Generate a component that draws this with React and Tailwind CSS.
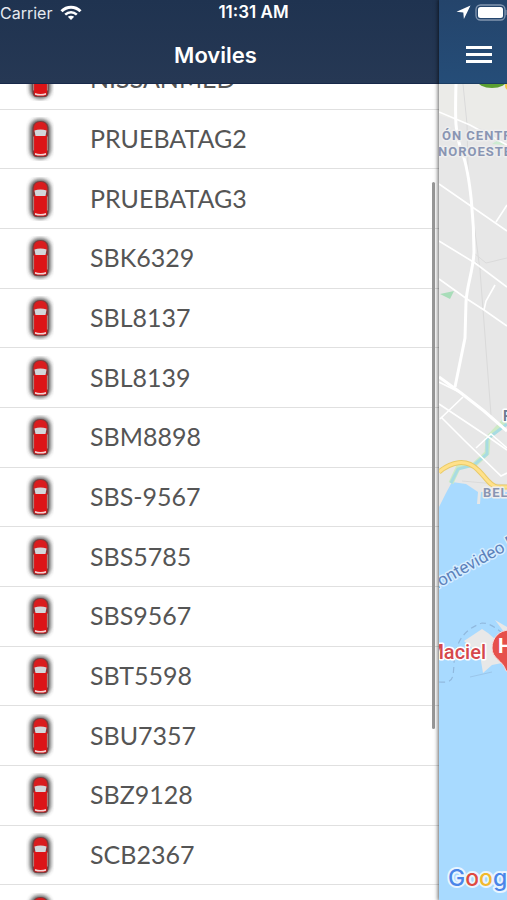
const VEHICLES = [
  'NISSANMED',
  'PRUEBATAG2',
  'PRUEBATAG3',
  'SBK6329',
  'SBL8137',
  'SBL8139',
  'SBM8898',
  'SBS-9567',
  'SBS5785',
  'SBS9567',
  'SBT5598',
  'SBU7357',
  'SBZ9128',
  'SCB2367',
  'SCB2368',
];

/**
 * Drawer with the list of tracked vehicles, opened over the map screen.
 * A strip of the map and its menu button stay visible on the right.
 */
export default function App() {
  return (
    <div className="relative flex h-screen overflow-hidden bg-white font-['Inter',sans-serif]">
      <StatusBar />

      <aside className="flex min-w-0 flex-1 flex-col">
        <header className="flex h-[84px] shrink-0 items-end justify-center border-b border-[#18294a] bg-linear-to-b from-[#1f3350] to-[#263854] pr-2 pb-4">
          <h1 className="text-[22px] leading-6 font-semibold text-white">Moviles</h1>
        </header>
        <VehicleList />
      </aside>

      <main className="z-10 flex w-[68px] shrink-0 flex-col shadow-[0_0_4px_1px_rgba(0,0,0,0.6)]">
        <div className="flex h-[84px] shrink-0 items-end border-b border-[#1b3d63] bg-linear-to-b from-[#24446b] to-[#254d78] pb-4 pl-[27px]">
          <button type="button" aria-label="Abrir menú" className="flex w-[26px] flex-col gap-1 pb-1">
            <span className="h-[3px] w-full bg-white" />
            <span className="h-[3px] w-full bg-white" />
            <span className="h-[3px] w-full bg-white" />
          </button>
        </div>
        <MapStrip />
      </main>
    </div>
  );
}

function StatusBar() {
  return (
    <div className="absolute inset-x-0 top-0 z-20 grid h-6 grid-cols-3 items-center text-[17px] text-white">
      <div className="flex items-center gap-2">
        <span className="text-base text-[#e6eaf0]">Carrier</span>
        <svg width="22" height="16" viewBox="0 0 22 16" fill="none" stroke="white" strokeWidth="3">
          <path d="M1.500 6.200C7 .8 15 .8 20.500 6.200" />
          <path d="M5.200 9.600c3.500-3.100 8.100-3.100 11.600 0" strokeWidth="2.600" />
          <path d="M11 15l-3.200-3.200c1.800-1.500 4.600-1.500 6.400 0z" fill="white" stroke="none" />
        </svg>
      </div>
      <span className="text-center font-semibold">11:31 AM</span>
      <div className="flex items-center justify-end gap-1">
        <svg width="15" height="15" viewBox="0 0 15 15" fill="white">
          <path d="M14.500 0.500L0.500 6.800l6.800.7.600 6.500z" />
        </svg>
        <svg width="32" height="17" viewBox="0 0 32 17">
          <rect x="1" y="1" width="29" height="15" rx="4.500" fill="none" stroke="#8296b0" strokeWidth="1.300" />
          <rect x="3" y="3" width="25" height="11" rx="2.500" fill="white" />
          <path d="M31 6v5" stroke="#8296b0" />
        </svg>
      </div>
    </div>
  );
}

function VehicleList() {
  return (
    <div className="relative min-h-0 flex-1 overflow-hidden">
      {/* Scrolled a little: the first and last rows are cut by the viewport */}
      <ul className="-mt-[34px] grid h-[calc(100%+79px)] auto-rows-fr">
        {VEHICLES.map((name) => (
          <li key={name} className="flex min-h-0 items-center gap-9 border-b border-[#e0e0e0] pl-[26px]">
            <CarIcon />
            <span className="pb-0.5 font-['Lato',sans-serif] text-[25px] leading-7 text-[#555555]">{name}</span>
          </li>
        ))}
      </ul>
      <div className="absolute top-[12%] right-1 h-[67%] w-[3px] rounded-full bg-[#989898]" />
    </div>
  );
}

function CarIcon() {
  return (
    <svg width="28" height="44" viewBox="0 0 28 44" className="shrink-0">
      <defs>
        <filter id="carShadow" x="-40%" y="-40%" width="180%" height="180%">
          <feGaussianBlur stdDeviation="1.900" />
        </filter>
      </defs>
      <rect x="4" y="2.500" width="20.500" height="39" rx="8.500" fill="#333333" opacity="0.850" filter="url(#carShadow)" />
      <path d="M6.500 12c0-5 3-8 8-8s8 3 8 8v23c0 3-1.500 5-4 5h-8c-2.500 0-4-2-4-5z" fill="#7d3a3b" />
      <path d="M7.800 11.500c.3-4.500 2.700-6.500 6.700-6.500s6.400 2 6.700 6.500v3H7.800z" fill="#d91c1e" />
      <path d="M8 18h13v17c0 2.500-1 4-3 4h-7c-2 0-3-1.500-3-4z" fill="#dc1417" />
      <path d="M8.500 13.500c3.500-1.300 8.500-1.300 12 0l-1 5.500h-10z" fill="#d3d7da" />
      <path d="M9 36c3.500 1.200 7.500 1.200 11 0v1.700c-3.500 1.200-7.500 1.200-11 0z" fill="#f3d3d3" />
      <path d="M7.600 19.500v14M21.400 19.500v14" stroke="#b79b93" strokeWidth="0.800" />
    </svg>
  );
}

// Coordinates are screen coordinates; the view box starts below the header.
function MapStrip() {
  return (
    <svg viewBox="439 84 68 816" preserveAspectRatio="xMinYMin slice" className="min-h-0 w-full flex-1 bg-[#a8daff]">
      <path d="M439 84h68v408h-26l-1 12h-3l1-12-12-8-14-2-6 11-7 14z" fill="#e7e7e7" />
      <path d="M439 84h68v53l-68-22z" fill="#ebebe8" />
      <path d="M440 294l14-3-4 8z" fill="#a8ddb9" />
      <path d="M492 144l6-4 7 5z" fill="#cdebd1" />
      <ellipse cx="492" cy="80" rx="15" ry="8" fill="#5b9e31" />
      <circle cx="509" cy="86" r="4" fill="#f5c944" />

      <g fill="none" stroke="#dadada" strokeWidth="1">
        <path d="M463 84l4 40 1 45 6 55 6 46 11 145" />
        <path d="M474 253l12 10 21-5M476 262l5 8" />
        <path d="M462 481l45 4" />
      </g>

      <path d="M507 418l-19 20-1 15-13 12-15 1-8 17" fill="none" stroke="#cdeac5" strokeWidth="5" />
      <path d="M507 424l-20 15v15l-13 11-16 4-7 14" fill="none" stroke="#a8dce2" strokeWidth="3" />

      <g fill="none" stroke="white" strokeWidth="1.600">
        <path d="M439 112l31 13 37 20" />
        <path d="M439 184l68 47M496 222l11-17" />
        <path d="M439 241l36 22 32 24" />
        <path d="M439 279l28 20 17 11 23 16M495 285l-9 16-2 9" />
        <path d="M439 382l20 10M463 397l-23 22" />
        <path d="M439 404l48 32 20 14M441 417l24 24 36 35 6-3" />
        <path d="M476 448l15-14 16 14" />
      </g>
      <g fill="none" stroke="white" strokeWidth="3">
        <path d="M456 84c-1 35-1 50 6 68 9 24 12 73 12 100-1 20-7 32-8 50l-1 36-10 49" />
        <path d="M439 377l22 16 23 18 23 20" />
      </g>
      <path d="M439 472c12-10 27-14 39-2 7 6 12 17 20 17h9" fill="none" stroke="#e9ca69" strokeWidth="5" />
      <path d="M439 472c12-10 27-14 39-2 7 6 12 17 20 17h9" fill="none" stroke="#ffe18a" strokeWidth="3" />

      {/* Harbour and ferry lines */}
      <path d="M464 641l18-12 6 4 7 6 12-5v28l-15 3-9 8-3-18z" fill="#e8e8e8" />
      <path d="M495 620l12 7v9z" fill="#e8e8e8" />
      <path
        d="M439 682c14 1 14-2 15-18 1-26 14-36 28-41 8 0 14 5 20 10"
        fill="none"
        stroke="#91b9de"
        strokeWidth="1.200"
        strokeDasharray="6 4"
      />
      <path d="M470 677l22-5" fill="none" stroke="#9bc6ea" />

      <g fontFamily="Roboto, sans-serif" stroke="white" strokeWidth="3" paintOrder="stroke" strokeLinejoin="round">
        <g fontSize="13" fontWeight="700" fill="#8995b3" letterSpacing="1" stroke="#eeeeee">
          <text x="442" y="140">ÓN CENTRO</text>
          <text x="438" y="156">NOROESTE</text>
          <text x="483" y="497">BELLA VISTA</text>
        </g>
        <text x="503" y="421" fontSize="14" fontWeight="700" fill="#6b7b92">P</text>
        <text transform="translate(428 594) rotate(-29)" fontSize="17" fill="#5c82bb" stroke="#d6edff">
          Montevideo Bay
        </text>
        <text x="486" y="659" fontSize="20" fontWeight="500" fill="#d5484d" textAnchor="end">Maciel</text>
      </g>

      <path d="M510 630c-11 0-18 8-18 18 0 11 11 12 14 23h8V630z" fill="#e6504b" stroke="#f7dddd" />
      <text x="498" y="653" fontFamily="Roboto, sans-serif" fontSize="20" fontWeight="700" fill="white">H</text>

      <text
        x="448"
        y="886"
        fontFamily="Inter, sans-serif"
        fontSize="23"
        fontWeight="500"
        stroke="#e9f5ff"
        strokeWidth="4"
        paintOrder="stroke"
        strokeLinejoin="round"
      >
        <tspan fill="#4b86e8">G</tspan>
        <tspan fill="#e04a40">o</tspan>
        <tspan fill="#f2b92e">o</tspan>
        <tspan fill="#4b86e8">g</tspan>
        <tspan fill="#3fa757">l</tspan>
        <tspan fill="#e04a40">e</tspan>
      </text>
    </svg>
  );
}
